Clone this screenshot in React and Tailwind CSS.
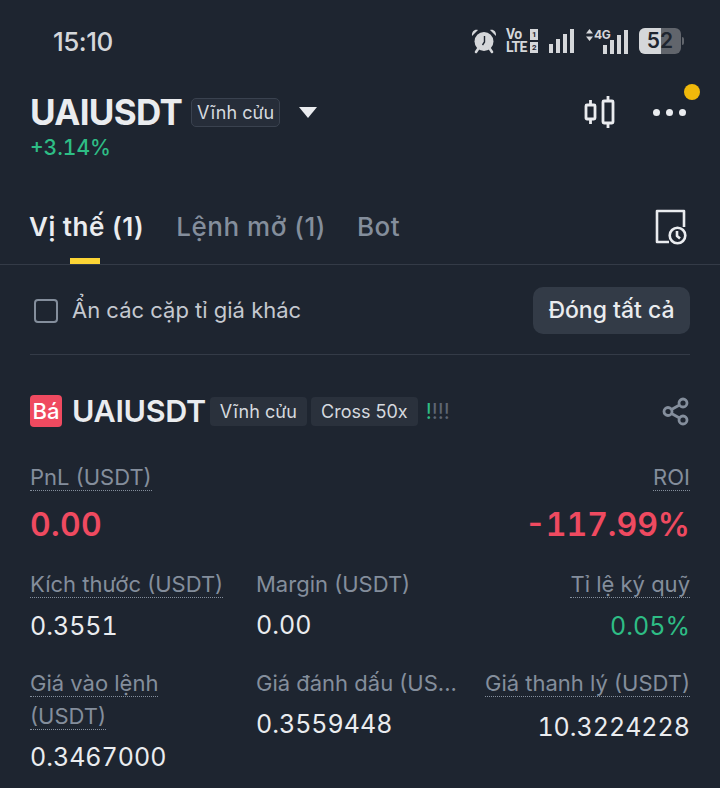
const dotted = 'border-b border-dotted border-[#848e9c]'

function Alarm() {
  return (
    <svg width="26" height="26" viewBox="0 0 26 26" fill="none">
      <path d="M1 8 7 2C4 .8.500 3 1 8ZM25 8l-6-6c3-1.200 6.500 1 6 6Z" fill="#d5d7da" />
      <circle cx="13" cy="13.500" r="9.500" fill="#d5d7da" />
      <path d="M13.500 8v6l-2 3" stroke="#1e2530" strokeWidth="1.400" />
      <path d="m7 21-2 3M19 21l2 3" stroke="#d5d7da" strokeWidth="2.600" strokeLinecap="round" />
    </svg>
  )
}

function Signal({ className }) {
  return (
    <div className={`flex items-end gap-[3px] ${className}`}>
      <span className="h-[9px] w-[4px] bg-[#d5d7da]" />
      <span className="h-[14px] w-[4px] bg-[#d5d7da]" />
      <span className="h-[19px] w-[4px] bg-[#d5d7da]" />
      <span className="h-[24px] w-[4px] bg-[#d5d7da]" />
    </div>
  )
}

function StatusBar() {
  return (
    <div className="flex h-[82px] items-center pl-[53px] pr-[36px]">
      <span className="text-[26px] font-medium tracking-[-0.02em] text-[#d5d7da]">15:10</span>
      <div className="ml-auto flex items-center">
        <Alarm />
        <div className="ml-[9px] flex w-[32px] flex-col font-['Roboto',sans-serif] text-[14px] font-bold leading-[13px] tracking-[-0.04em] text-[#d5d7da]">
          <div className="flex items-center justify-between">
            Vo
            <span className="flex h-[11px] w-[8px] items-center justify-center bg-[#d5d7da] text-[8px] text-[#1e2530]">1</span>
          </div>
          <div className="flex items-center justify-between">
            LTE
            <span className="flex h-[11px] w-[8px] items-center justify-center bg-[#d5d7da] text-[8px] text-[#1e2530]">2</span>
          </div>
        </div>
        <Signal className="ml-[11px]" />
        <div className="relative ml-[12px] h-[26px] w-[42px]">
          <svg className="absolute left-0 top-[1px]" width="7" height="12" viewBox="0 0 7 12" fill="#d5d7da">
            <path d="M3.500 0 7 4.500H0ZM3.500 12 0 7.500h7Z" />
          </svg>
          <span className="absolute left-[8px] top-0 text-[12px] font-bold leading-[13px] tracking-[-0.04em] text-[#d5d7da]">4G</span>
          <Signal className="absolute bottom-0 right-0" />
        </div>
        <div className="relative ml-[11px] flex h-[26px] w-[42px] items-center justify-center overflow-hidden rounded-[6px] bg-[#61656c]">
          <span className="absolute inset-y-0 left-0 w-[22px] bg-[#d5d7da]" />
          <span className="relative text-[21px] font-semibold text-[#1e2530]">52</span>
        </div>
        <span className="ml-px h-[8px] w-[2px] rounded-r-sm bg-[#61656c]" />
      </div>
    </div>
  )
}

function Header() {
  return (
    <div className="flex items-start pl-[30px] pr-[34px]">
      <div>
        <div className="flex h-[60px] items-center">
          <h1 className="text-[35px] font-bold leading-none tracking-[-0.02em] text-[#eaecef]">UAIUSDT</h1>
          <span className="ml-[9px] flex h-[29px] w-[89px] items-center justify-center rounded-[5px] border border-[#3a424f] bg-[#262d39] text-[18px] text-[#d5d9df]">Vĩnh cửu</span>
          <span className="ml-[19px] h-0 w-0 border-x-[9px] border-t-[11px] border-x-transparent border-t-[#eaecef]" />
        </div>
        <div className="-mt-[7px] text-[21px] font-medium tabular-nums leading-[26px] text-[#2ebd85]">+3.14%</div>
      </div>
      <div className="relative ml-auto flex h-[60px] items-center">
        <svg className="ml-px" width="32" height="34" viewBox="0 0 32 34" fill="none" stroke="#eaecef" strokeWidth="2.800" strokeLinejoin="round">
          <rect x="2" y="10" width="9" height="14" rx="1" />
          <path d="M6.500 5v5M6.500 24v5" />
          <rect x="19" y="6" width="10" height="22" rx="1" />
          <path d="M24 1v5M24 28v5" />
        </svg>
        <div className="ml-[37px] flex gap-[6px]">
          <span className="h-[7px] w-[7px] rounded-full bg-[#eaecef]" />
          <span className="h-[7px] w-[7px] rounded-full bg-[#eaecef]" />
          <span className="h-[7px] w-[7px] rounded-full bg-[#eaecef]" />
        </div>
        <span className="absolute -right-[14px] top-[2px] h-[16px] w-[16px] rounded-full bg-[#f0b90b]" />
      </div>
    </div>
  )
}

function Tabs() {
  return (
    <div className="mt-[38px] flex h-[66px] items-start border-b border-[#343b47] pl-[29px] pr-[32px]">
      <div className="flex flex-col items-start">
        <span className="text-[26px] font-semibold leading-[56px] tracking-[0.02em] text-[#eaecef]">Vị thế (1)</span>
        <span className="ml-[41px] mt-[3px] h-[6px] w-[30px] bg-[#fcd535]" />
      </div>
      <span className="ml-[32px] text-[26px] font-medium leading-[56px] tracking-[0.02em] text-[#848e9c]">Lệnh mở (1)</span>
      <span className="ml-[31px] text-[26px] font-medium leading-[56px] tracking-[0.02em] text-[#848e9c]">Bot</span>
      <svg className="ml-auto mt-[9px]" width="34" height="38" viewBox="0 0 34 38" fill="none" stroke="#eaecef" strokeWidth="2.600" strokeLinejoin="round">
        <path d="M15 34H3V3h27v16" />
        <circle cx="23.500" cy="27.500" r="7.800" />
        <path d="M23 23v5l3 2.500" />
      </svg>
    </div>
  )
}

function Filter() {
  return (
    <div className="mx-[30px] flex h-[90px] items-center justify-between border-b border-[#343b47] pt-[2px]">
      <div className="flex items-center">
        <span className="ml-[4px] h-[24px] w-[24px] rounded-[4px] border-2 border-[#848e9c]" />
        <span className="ml-[14px] text-[22px] text-[#c5c9d0]">Ẩn các cặp tỉ giá khác</span>
      </div>
      <button className="h-[47px] w-[157px] rounded-[10px] bg-[#333b47] text-[23px] font-medium text-[#eaecef]">Đóng tất cả</button>
    </div>
  )
}

function Label({ children, className = '' }) {
  return <span className={`${dotted} text-[22px] leading-[25px] text-[#848e9c] ${className}`}>{children}</span>
}

function Position() {
  return (
    <div className="px-[30px]">
      <div className="mt-[36px] flex h-[40px] items-center">
        <span className="flex h-[32px] w-[32px] items-center justify-center rounded-[4px] bg-[#ef4a60] text-[22px] font-medium text-white">Bá</span>
        <span className="ml-[10px] text-[30.5px] font-semibold tracking-[-0.01em] text-[#eaecef]">UAIUSDT</span>
        <span className="ml-[4px] flex h-[29px] w-[97px] items-center justify-center rounded-[4px] bg-[#2a313c] text-[18px] text-[#d5d9df]">Vĩnh cửu</span>
        <span className="ml-[4px] flex h-[29px] w-[107px] items-center justify-center rounded-[4px] bg-[#2a313c] text-[18px] text-[#d5d9df]">Cross 50x</span>
        <span className="ml-[8px] flex text-[21px] leading-none text-[#5e6673]">
          <span className="w-[6px] text-[#2ebd85]">!</span>
          <span className="w-[6px]">!</span>
          <span className="w-[6px]">!</span>
          <span className="w-[6px]">!</span>
        </span>
        <svg className="-mr-px ml-auto" width="30" height="30" viewBox="0 0 30 30" fill="none" stroke="#848e9c" strokeWidth="2.800">
          <circle cx="7" cy="15.500" r="4" />
          <circle cx="22" cy="7" r="4" />
          <circle cx="22" cy="24" r="4" />
          <path d="m10.500 13.500 8-4.500M10.500 17.500l8 4.500" />
        </svg>
      </div>

      <div className="mt-[34px] flex items-start justify-between">
        <div className="flex flex-col items-start">
          <Label>PnL (USDT)</Label>
          <span className="mt-[15px] text-[32px] font-semibold tabular-nums leading-[38px] tracking-[0.01em] text-[#ef4a60]">0.00</span>
        </div>
        <div className="flex flex-col items-end">
          <Label>ROI</Label>
          <span className="mt-[15px] text-[32px] font-semibold tabular-nums leading-[38px] text-[#ef4a60]">-117.99%</span>
        </div>
      </div>

      <div className="mt-[28px] grid grid-cols-[226px_1fr_auto]">
        <div className="flex flex-col items-start">
          <Label>Kích thước (USDT)</Label>
          <span className="mt-[12px] text-[25px] tabular-nums leading-[32px] text-[#eaecef]">0.3551</span>
        </div>
        <div className="flex flex-col items-start">
          <span className="text-[22px] leading-[25px] text-[#848e9c]">Margin (USDT)</span>
          <span className="mt-[12px] text-[25px] tabular-nums leading-[32px] text-[#eaecef]">0.00</span>
        </div>
        <div className="flex flex-col items-end">
          <Label>Tỉ lệ ký quỹ</Label>
          <span className="mt-[12px] text-[25px] tabular-nums leading-[32px] text-[#2ebd85]">0.05%</span>
        </div>
      </div>

      <div className="mt-[29px] grid grid-cols-[226px_228px_1fr]">
        <div className="flex flex-col items-start">
          <Label>Giá vào lệnh</Label>
          <Label className="mt-[7px]">(USDT)</Label>
          <span className="mt-[11px] text-[25px] tabular-nums leading-[32px] text-[#eaecef]">0.3467000</span>
        </div>
        <div className="flex flex-col items-start">
          <span className="text-[22px] leading-[25px] text-[#848e9c]">Giá đánh dấu (US...</span>
          <span className="mt-[12px] text-[25px] tabular-nums leading-[32px] text-[#eaecef]">0.3559448</span>
        </div>
        <div className="flex flex-col items-end">
          <Label>Giá thanh lý (USDT)</Label>
          <span className="mt-[14px] text-[25px] tabular-nums leading-[32px] text-[#eaecef]">10.3224228</span>
        </div>
      </div>
    </div>
  )
}

export default function App() {
  return (
    <div className="h-[788px] w-[720px] overflow-hidden bg-[#1e2530] font-['Inter',sans-serif]">
      <StatusBar />
      <Header />
      <Tabs />
      <Filter />
      <Position />
    </div>
  )
}
